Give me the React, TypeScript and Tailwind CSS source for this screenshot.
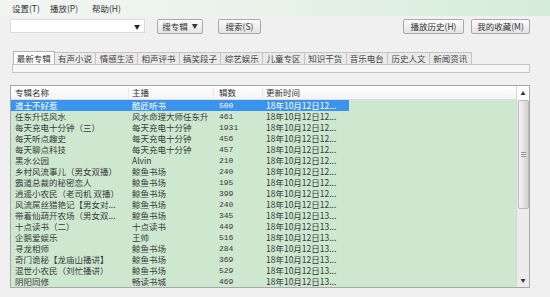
import React from "react";

const rows: [string, string, string, string][] = [
  ["道士不好惹", "酷匠听书", "500", "18年10月12日12..."],
  ["任东升话风水", "风水命理大师任东升", "461", "18年10月12日12..."],
  ["每天充电十分钟（三）", "每天充电十分钟", "1931", "18年10月12日12..."],
  ["每天听点趣史", "每天充电十分钟", "456", "18年10月12日12..."],
  ["每天聊点科技", "每天充电十分钟", "457", "18年10月12日12..."],
  ["黑水公园", "Alvin", "210", "18年10月12日12..."],
  ["乡村风流事儿（男女双播）", "鲸鱼书场", "240", "18年10月12日12..."],
  ["霸道总裁的秘密恋人", "鲸鱼书场", "195", "18年10月12日12..."],
  ["逍遥小农民（老司机 双播）", "鲸鱼书场", "399", "18年10月12日12..."],
  ["风流屌丝猎艳记【男女对...", "鲸鱼书场", "240", "18年10月12日12..."],
  ["带着仙葫开农场（男女双...", "鲸鱼书场", "345", "18年10月12日13..."],
  ["十点读书（二）", "十点读书", "449", "18年10月12日13..."],
  ["企鹅爱娱乐", "王帅", "516", "18年10月12日13..."],
  ["寻龙相师", "鲸鱼书场", "284", "18年10月12日13..."],
  ["奇门诡秘【龙庙山播讲】", "鲸鱼书场", "369", "18年10月12日13..."],
  ["混世小农民（刘忙播讲）", "鲸鱼书场", "529", "18年10月12日13..."],
  ["阴阳同修", "畅读书城", "469", "18年10月12日13..."],
];

const tabs = [
  "最新专辑",
  "有声小说",
  "情感生活",
  "相声评书",
  "搞笑段子",
  "综艺娱乐",
  "儿童专区",
  "知识干货",
  "音乐电台",
  "历史人文",
  "新闻资讯",
];

function Btn({ label, w }: { label: string; w: string }) {
  return (
    <div
      className={`${w} h-[15px] flex items-center justify-center border border-[#a9a9a9] rounded-[2px] bg-gradient-to-b from-[#fbfbfb] to-[#e4e4e4] text-[8.5px] leading-none text-[#333]`}
    >
      {label}
    </div>
  );
}

export default function App() {
  return (
    <div className="w-[550px] h-[297px] overflow-hidden bg-[#f0f0f0] flex flex-col font-['Noto_Sans_CJK_SC',sans-serif] text-[#333]">
      {/* menu bar */}
      <div className="h-[16px] flex items-center pl-[12px] bg-gradient-to-r from-[#f3f5f3] via-[#e8f2e9] to-[#d5ecd8] text-[8.5px] leading-none">
        <span className="w-[38px]">设置(T)</span>
        <span className="w-[42px]">播放(P)</span>
        <span>帮助(H)</span>
      </div>

      {/* toolbar */}
      <div className="mt-[2px] h-[16px] flex items-center pl-[10px] pr-[20px]">
        <div className="w-[135px] h-[14px] bg-white border border-[#dcdcdc] flex items-center justify-end pr-[4px]">
          <span className="text-[6px] text-[#222]">▼</span>
        </div>
        <div className="ml-[12px] w-[46px] h-[15px] flex items-center justify-center gap-[4px] border border-[#a9a9a9] rounded-[2px] bg-gradient-to-b from-[#fbfbfb] to-[#e4e4e4] text-[8.5px] leading-none">
          <span>搜专辑</span>
          <span className="text-[6px]">▼</span>
        </div>
        <div className="ml-[15px]">
          <Btn label="搜索(S)" w="w-[43px]" />
        </div>
        <div className="ml-auto flex gap-[7px]">
          <Btn label="播放历史(H)" w="w-[61px]" />
          <Btn label="我的收藏(M)" w="w-[59px]" />
        </div>
      </div>

      {/* tabs */}
      <div className="mt-[17px] ml-[12px] w-[518px] flex flex-col">
        <div className="flex h-[13px] items-end pl-[1px]">
          {tabs.map((t, i) => (
            <div
              key={t}
              className={
                i === 0
                  ? "w-[41.7px] h-[13px] bg-white border border-b-0 border-[#b5b5b5] flex items-center justify-center text-[8.5px] leading-none"
                  : "w-[41.7px] h-[12px] bg-[#eaeaea] border border-l-0 border-b-0 border-[#c4c4c4] flex items-center justify-center text-[8.5px] leading-none text-[#444]"
              }
            >
              {t}
            </div>
          ))}
        </div>
        <div className="h-[9px] border border-[#c4c4c4] bg-[#f7f7f7]" />
      </div>

      {/* list */}
      <div className="mt-[12px] ml-[10px] w-[520px] h-[203px] border border-[#a8a8a8] flex bg-[#cde8cf]">
        <div className="flex-1 flex flex-col">
          <div className="h-[14px] flex items-center bg-gradient-to-b from-white to-[#f4f4f4] border-b border-[#dddddd] text-[8.5px] leading-none">
            <span className="w-[118px] pl-[4px] border-r border-[#e6e6e6]">专辑名称</span>
            <span className="w-[85px] pl-[3px] border-r border-[#e6e6e6]">主播</span>
            <span className="w-[49px] pl-[5px] border-r border-[#e6e6e6]">辑数</span>
            <span className="w-[86px] pl-[3px]">更新时间</span>
          </div>
          {rows.map((r, i) => (
            <div
              key={i}
              className={`h-[11px] w-[338px] flex items-center text-[8.5px] leading-none whitespace-nowrap ${
                i === 0 ? "bg-[#3a93ec] text-white" : "text-[#3a3a3a]"
              }`}
            >
              <span className="w-[118px] pl-[4px] overflow-visible">{r[0]}</span>
              <span className="w-[85px] pl-[3px]">{r[1]}</span>
              <span className="w-[49px] pl-[5px] font-['Liberation_Mono',monospace] text-[8px]">{r[2]}</span>
              <span className="w-[86px] pl-[3px]">{r[3]}</span>
            </div>
          ))}
        </div>
        {/* scrollbar */}
        <div className="w-[13px] bg-[#ececec] border-l border-[#d6d6d6] flex flex-col items-center">
          <div className="h-[14px] w-full bg-white flex items-center justify-center text-[5px] text-[#333]">▲</div>
          <div className="w-[11px] h-[109px] bg-gradient-to-r from-[#f4f4f4] via-[#e4e4e4] to-[#d0d0d0] border border-[#b9b9b9] rounded-[2px] flex items-center justify-center">
            <div className="flex flex-col gap-[1px]">
              <div className="w-[5px] h-px bg-[#999]" />
              <div className="w-[5px] h-px bg-[#999]" />
              <div className="w-[5px] h-px bg-[#999]" />
            </div>
          </div>
          <div className="flex-1" />
          <div className="h-[14px] w-full flex items-center justify-center text-[5px] text-[#333]">▼</div>
        </div>
      </div>
    </div>
  );
}
